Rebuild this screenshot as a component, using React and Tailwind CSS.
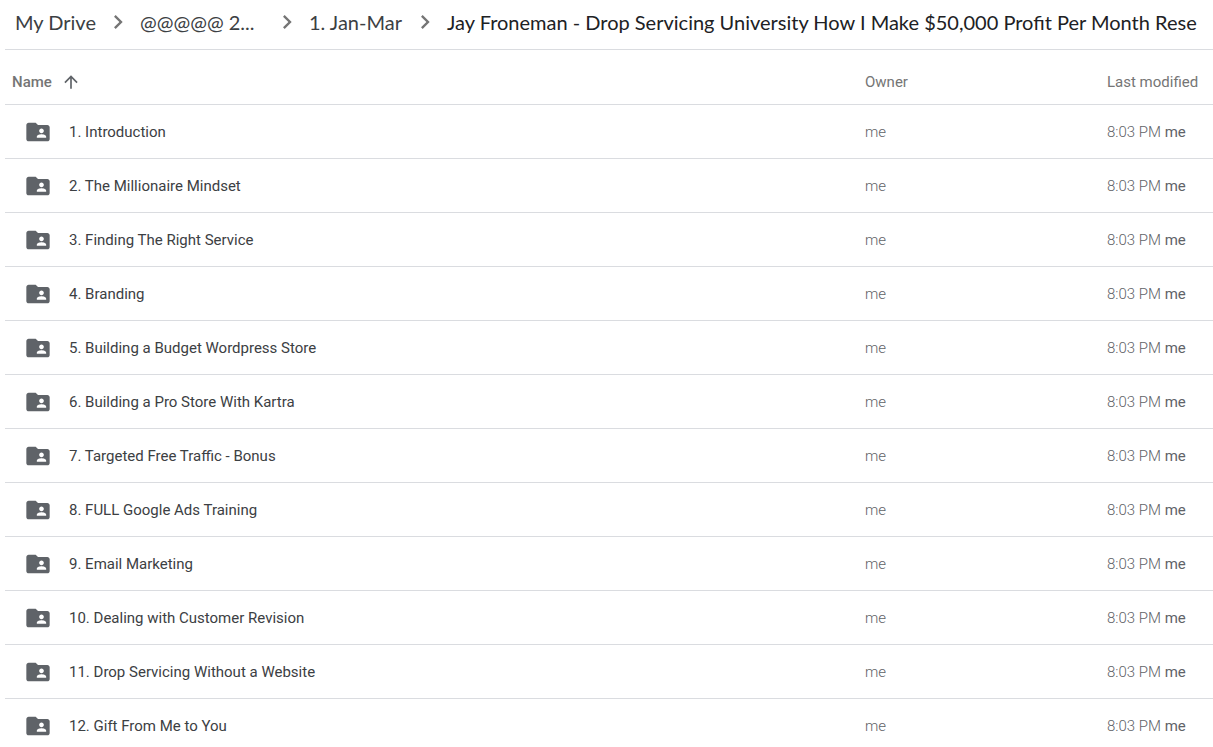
const folders = [
  "1. Introduction",
  "2. The Millionaire Mindset",
  "3. Finding The Right Service",
  "4. Branding",
  "5. Building a Budget Wordpress Store",
  "6. Building a Pro Store With Kartra",
  "7. Targeted Free Traffic - Bonus",
  "8. FULL Google Ads Training",
  "9. Email Marketing",
  "10. Dealing with Customer Revision",
  "11. Drop Servicing Without a Website",
  "12. Gift From Me to You",
];

const Chevron = () => (
  <svg viewBox="0 0 24 24" className="h-7 w-7 shrink-0 fill-[#757575]" aria-hidden="true">
    <path d="M10 6 8.59 7.41 13.17 12l-4.58 4.59L10 18l6-6z" />
  </svg>
);

const SharedFolder = () => (
  <svg viewBox="0 0 24 24" className="h-7 w-7 fill-[#5f6368]" aria-hidden="true">
    <path d="M20 6h-8l-2-2H4c-1.100 0-1.990.9-1.990 2L2 18c0 1.100.9 2 2 2h16c1.100 0 2-.9 2-2V8c0-1.100-.9-2-2-2zm-5 3c1.100 0 2 .9 2 2s-.9 2-2 2-2-.9-2-2 .9-2 2-2zm4 8h-8v-1c0-1.330 2.670-2 4-2s4 .67 4 2v1z" />
  </svg>
);

const Breadcrumb = () => (
  <nav
    aria-label="Folder path"
    className="flex h-[50px] items-center overflow-hidden border-b border-[#dadce0] pb-[6px] pl-[10px] font-['Lato','Open_Sans',sans-serif] text-xl whitespace-nowrap text-[#3c4043]"
  >
    <button type="button" className="w-[89px] shrink-0 text-left">My Drive</button>
    <Chevron />
    <button type="button" className="ml-2 w-[133px] shrink-0 text-left">@@@@@ 2...</button>
    <Chevron />
    <button type="button" className="ml-2 w-[102px] shrink-0 text-left">1. Jan-Mar</button>
    <Chevron />
    <button type="button" className="ml-2 shrink-0 text-[#202124]">
      Jay Froneman - Drop Servicing University How I Make $50,000 Profit Per Month Rese
    </button>
  </nav>
);

const App = () => {
  return (
    <main className="h-screen overflow-hidden bg-white pl-[5px] font-['Roboto',sans-serif] text-[15px]">
      <Breadcrumb />
      <table className="w-full table-fixed border-collapse text-left">
        <thead>
          <tr className="h-[54px] border-b border-[#dadce0] text-[#757575]">
            <th className="pt-[10px] pl-[7px] font-medium">
              <button type="button" className="flex items-center gap-[9px]">
                Name
                <svg viewBox="0 0 24 24" className="h-5 w-5 fill-[#5f6368]" aria-label="Sorted ascending">
                  <path d="M4 12l1.410 1.410L11 7.830V20h2V7.830l5.580 5.590L20 12l-8-8-8 8z" />
                </svg>
              </button>
            </th>
            <th className="w-[242px] pt-[10px] font-normal">Owner</th>
            <th className="w-[106px] pt-[10px] font-normal">Last modified</th>
          </tr>
        </thead>
        <tbody>
          {folders.map((name) => (
            <tr key={name} className="h-[54px] border-b border-[#dadce0] font-light text-[#5f6368]">
              <td className="pt-[2px] pl-[19px]">
                <div className="flex items-center gap-[17px] font-normal text-[#3c4043]">
                  <SharedFolder />
                  {name}
                </div>
              </td>
              <td className="pt-[2px]">me</td>
              <td className="pt-[2px] whitespace-nowrap">
                8:03 PM <span className="font-normal">me</span>
              </td>
            </tr>
          ))}
        </tbody>
      </table>
    </main>
  );
};

export default App;
